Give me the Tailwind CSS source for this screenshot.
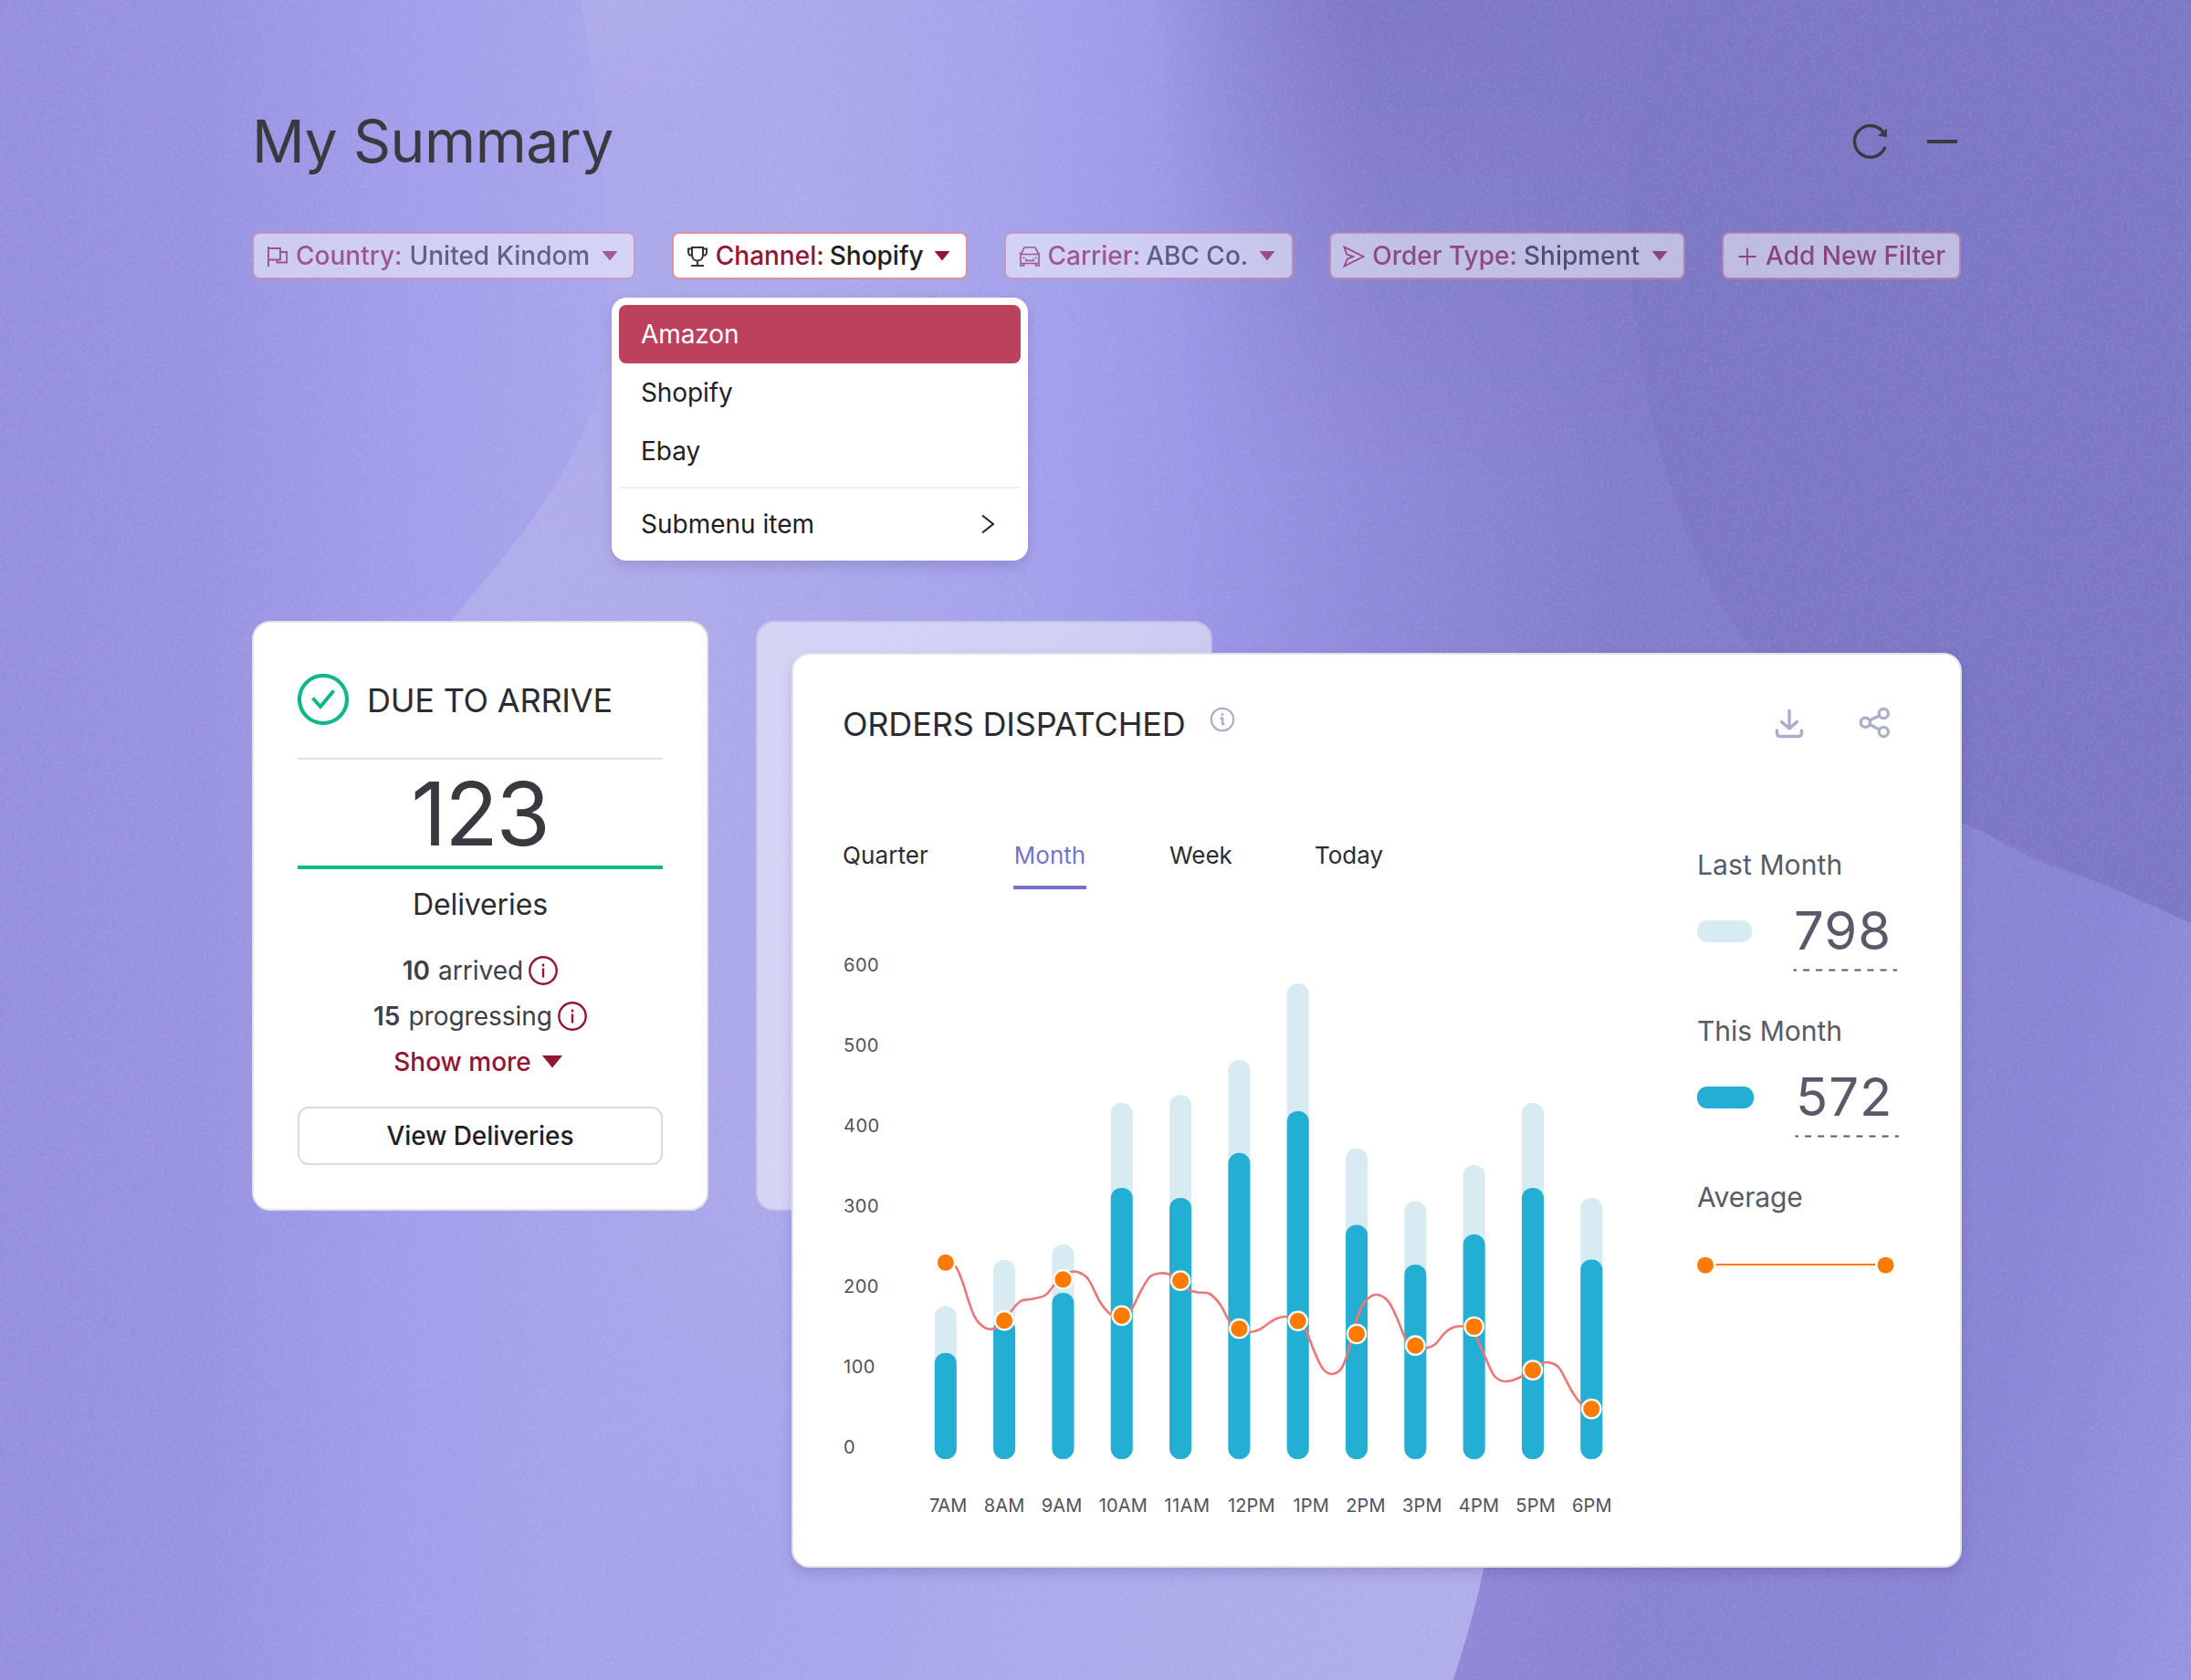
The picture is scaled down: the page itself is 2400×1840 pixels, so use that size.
<!DOCTYPE html>
<html lang="en">
<head>
<meta charset="utf-8">
<title>My Summary</title>
<script src="https://cdn.jsdelivr.net/npm/@tailwindcss/browser@4"></script>
</head>
<body class="font-['Inter',sans-serif]">
<div class="relative w-[2400px] h-[1840px] overflow-hidden bg-[#a19deb]">
  <!-- backdrop -->
  <svg class="absolute inset-0" width="2400" height="1840" viewBox="0 0 2400 1840">
    <defs>
      <linearGradient id="base" gradientUnits="userSpaceOnUse" x1="0" y1="0" x2="2400" y2="0">
        <stop offset="0" stop-color="#9590dd"/><stop offset=".09" stop-color="#9893e1"/><stop offset=".19" stop-color="#a29eeb"/>
        <stop offset=".27" stop-color="#a7a4eb"/><stop offset=".36" stop-color="#acaaea"/><stop offset=".47" stop-color="#a4a1ec"/>
        <stop offset=".54" stop-color="#9b97e6"/><stop offset=".63" stop-color="#8e89d8"/><stop offset=".74" stop-color="#827dcb"/><stop offset="1" stop-color="#7f7ac8"/>
      </linearGradient>
      <linearGradient id="beam" gradientUnits="userSpaceOnUse" x1="600" y1="0" x2="1100" y2="0">
        <stop offset="0" stop-color="#afadea"/><stop offset=".3" stop-color="#adabea"/><stop offset="1" stop-color="#a3a0ec" stop-opacity="0"/>
      </linearGradient>
      <linearGradient id="fade" gradientUnits="userSpaceOnUse" x1="0" y1="0" x2="0" y2="1250">
        <stop offset="0" stop-color="#fff"/><stop offset=".1" stop-color="#666"/><stop offset=".28" stop-color="#666"/><stop offset=".42" stop-color="#eee"/><stop offset=".55" stop-color="#fff"/><stop offset="1" stop-color="#000"/>
      </linearGradient>
      <mask id="beamMask"><rect width="2400" height="1840" fill="url(#fade)"/></mask>
      <linearGradient id="top" gradientUnits="userSpaceOnUse" x1="1260" y1="0" x2="1490" y2="-20">
        <stop offset="0" stop-color="#7d78c5" stop-opacity="0"/><stop offset="1" stop-color="#7d78c5"/>
      </linearGradient>
      <linearGradient id="topFade" gradientUnits="userSpaceOnUse" x1="0" y1="0" x2="0" y2="520">
        <stop offset="0" stop-color="#fff"/><stop offset=".3" stop-color="#bbb"/><stop offset="1" stop-color="#000"/>
      </linearGradient>
      <mask id="topMask"><rect width="2400" height="1840" fill="url(#topFade)"/></mask>
      <linearGradient id="low" gradientUnits="userSpaceOnUse" x1="500" y1="1500" x2="1600" y2="1700">
        <stop offset="0" stop-color="#a3a0ec" stop-opacity="0"/><stop offset=".3" stop-color="#a5a2ec"/><stop offset=".6" stop-color="#abaaeb"/><stop offset="1" stop-color="#b0aeea"/>
      </linearGradient>
      <linearGradient id="lowFade" gradientUnits="userSpaceOnUse" x1="0" y1="1300" x2="0" y2="1700">
        <stop offset="0" stop-color="#000"/><stop offset="1" stop-color="#fff"/>
      </linearGradient>
      <mask id="lowMask"><rect width="2400" height="1840" fill="url(#lowFade)"/></mask>
      <linearGradient id="lowR" gradientUnits="userSpaceOnUse" x1="1600" y1="1500" x2="2400" y2="1700">
        <stop offset="0" stop-color="#8f89d9"/><stop offset=".3" stop-color="#8883d1"/><stop offset=".7" stop-color="#8a85d4"/><stop offset="1" stop-color="#9792e0"/>
      </linearGradient>
      <filter id="grain" x="0" y="0" width="100%" height="100%">
        <feTurbulence type="fractalNoise" baseFrequency=".3" numOctaves="3" seed="4"/>
        <feColorMatrix values="0 0 0 0 1  0 0 0 0 1  0 0 0 0 1  1.1 0 0 0 -.45"/>
      </filter>
    </defs>
    <rect width="2400" height="1840" fill="url(#base)"/>
    <rect width="2400" height="600" fill="url(#top)" mask="url(#topMask)"/>
    <path d="M636 0C655 120 668 250 664 380C655 490 570 590 492 682L300 1300H1150V0Z" fill="url(#beam)" mask="url(#beamMask)"/>
    <path d="M400 1300H1670C1655 1620 1625 1740 1592 1840H400Z" fill="url(#low)" mask="url(#lowMask)"/>
    <path d="M1660 1500C1650 1620 1625 1740 1592 1840H2400V982C2300 975 2220 945 2148 895V1500Z" fill="url(#lowR)"/>
    <path d="M1782 230C1790 460 1850 630 1925 716C2000 800 2060 856 2148 900C2230 938 2320 974 2400 1011V0H1830C1800 60 1782 140 1782 230Z" fill="#7c77c4"/>
    <rect width="2400" height="1840" filter="url(#grain)" opacity=".16"/>
  </svg>

  <main class="relative pl-[276px] w-[2148px] pt-[115px]">
    <header class="flex items-center justify-between h-20">
      <h1 class="text-[64px] leading-[80px] text-[#393a3f] tracking-[-0.4px]">My Summary</h1>
      <div class="flex items-center">
        <svg width="44" height="44" viewBox="2026 133 44 44" class="mr-[41px]" fill="none" stroke="#393a3f" stroke-width="3.4">
          <path d="M2063.3 145.5A17.3 17.3 0 1 0 2065 160.9"/><path d="M2066.8 140.8V150.2L2057 148.6Z" fill="#393a3f" stroke="none"/>
        </svg>
        <span class="block w-[33px] h-1 bg-[#393a3f] mr-[4px]"></span>
      </div>
    </header>

    <nav class="flex justify-between mt-[59px] h-[52px] text-[28px] leading-[47px] font-medium whitespace-nowrap text-[#1f2024]">
      <div class="flex items-center w-[420px] border-2 border-[#e08e9e] rounded-lg bg-white opacity-50 pl-[15px] pt-px">
        <svg width="22" height="22" viewBox="0 0 22 22" fill="none" stroke="#931535" stroke-width="1.9"><path d="M1 0V22M1 2H14V14.500H1M14 6H21.200V17.500H10.500V14.500"/></svg>
        <span class="ml-[9px] text-[#931535]">Country:</span><span class="ml-2">United Kindom</span>
        <svg class="ml-[13px]" width="18" height="11" viewBox="0 0 18 11"><path d="M.5 0H17.500L9 10.500Z" fill="#931535"/></svg>
      </div>
      <div class="flex items-center w-[324px] border-2 border-[#e08e9e] rounded-lg bg-white pl-[15px] pt-px">
        <svg width="22" height="22" viewBox="0 0 22 22" fill="none" stroke="#333539" stroke-width="2"><path d="M5 1H17V9C17 13 14.500 15.500 11 15.500S5 13 5 9ZM5 2.500H1V6C1 8.500 2.500 10 5.500 10M17 2.500H21V6C21 8.500 19.500 10 16.500 10M11 15.500V21M4 21H18"/></svg>
        <span class="ml-[9px] text-[#931535]">Channel:</span><span class="ml-[6px]">Shopify</span>
        <svg class="ml-[11px]" width="18" height="11" viewBox="0 0 18 11"><path d="M.5 0H17.500L9 10.500Z" fill="#931535"/></svg>
      </div>
      <div class="flex items-center w-[317px] border-2 border-[#e08e9e] rounded-lg bg-white opacity-50 pl-[14px] pt-px">
        <svg width="24" height="22" viewBox="0 0 24 22" fill="none" stroke="#931535" stroke-width="1.7"><path d="M2 21V9.500L5.500 1.800Q5.800 1 6.800 1H17.200Q18.200 1 18.500 1.800L22 9.500V21H18.500V18.500H5.500V21ZM.5 7.500H3M21 7.500H23.500M3 8.500H21M2 18.500H22M8 13.500V15.500H16V13.500M4.500 12.500H6.500M17.500 12.500H19.500"/></svg>
        <span class="ml-[8px] text-[#931535]">Carrier:</span><span class="ml-[6px]">ABC Co.</span>
        <svg class="ml-[12px]" width="18" height="11" viewBox="0 0 18 11"><path d="M.5 0H17.500L9 10.500Z" fill="#931535"/></svg>
      </div>
      <div class="flex items-center w-[390px] border-2 border-[#e08e9e] rounded-lg bg-white opacity-50 pl-[13px] pt-px">
        <svg width="24" height="24" viewBox="0 0 24 24" fill="none" stroke="#931535" stroke-width="1.8"><path d="M1.500 1.500L22.500 12L1.500 22.500L4.800 14.600L11 12L4.300 9.600Z"/></svg>
        <span class="ml-[8px] text-[#931535]">Order Type:</span><span class="ml-[7px]">Shipment</span>
        <svg class="ml-[13px]" width="18" height="11" viewBox="0 0 18 11"><path d="M.5 0H17.500L9 10.500Z" fill="#931535"/></svg>
      </div>
      <div class="flex items-center w-[262px] border-2 border-[#e08e9e] rounded-lg bg-white opacity-50 pl-[16px] pt-px">
        <svg width="20" height="20" viewBox="0 0 20 20" fill="none" stroke="#931535" stroke-width="1.8"><path d="M10 .5V19.500M.5 10H19.500"/></svg>
        <span class="ml-[10px] text-[#931535]">Add New Filter</span>
      </div>
    </nav>

    <div class="absolute left-[670px] top-[326px] w-[456px] h-[288px] rounded-2xl bg-white p-2 shadow-[0_6px_14px_rgba(60,50,120,0.2)] text-[28px] leading-[64px] text-[#1f2024]">
      <div class="h-16 rounded-lg bg-[#bb415d] px-6 tracking-[-0.1px] text-white">Amazon</div>
      <div class="h-16 px-6 tracking-[-0.1px]">Shopify</div>
      <div class="h-16 px-6">Ebay</div>
      <div class="my-[7px] h-[2px] bg-[#efefef]"></div>
      <div class="flex h-16 items-center justify-between pl-6 pr-[28px]">Submenu item
        <svg width="16" height="22" viewBox="0 0 16 22" fill="none" stroke="#1f2024" stroke-width="2"><path d="M2 1.500L14 11L2 20.500"/></svg>
      </div>
    </div>

    <div class="flex items-start mt-[374px]">
      <section class="w-[500px] h-[646px] shrink-0 rounded-[20px] border-2 border-[#e2e2e8] bg-white px-12 pt-14">
        <div class="flex items-center h-14">
          <svg width="56" height="56" viewBox="326 738 56 56" fill="none" stroke="#0fb888"><circle cx="354" cy="766" r="26" stroke-width="4.200"/><path d="M342.500 764.500L351 774L365.500 756.500" stroke-width="4"/></svg>
          <h2 class="ml-5 pt-px text-[36px] leading-[56px] tracking-[-0.22px] text-[#2b2c33] whitespace-nowrap">DUE TO ARRIVE</h2>
        </div>
        <div class="mt-9 h-[2px] bg-[#e2e2e4]"></div>
        <div class="h-[116px] pr-px text-center text-[96px] leading-[118px] tracking-[-2.2px] text-[#393a40]">123</div>
        <div class="h-1 bg-[#0fb888]"></div>
        <div class="h-[78px] text-center text-[32px] leading-[78px] tracking-[-0.1px] text-[#2b2c33]">Deliveries</div>
        <div class="mt-2 flex h-[50px] items-center justify-center text-[28px] text-[#3f4047]"><b class="font-semibold mr-[9px]">10</b>arrived
          <svg class="ml-[6px]" width="32" height="32" viewBox="0 0 32 32" fill="none" stroke="#931535" stroke-width="2.400"><circle cx="16" cy="16" r="14.700"/><path d="M16 13.500V23.500M16 8.500V11.500"/></svg>
        </div>
        <div class="flex h-[50px] items-center justify-center text-[28px] text-[#3f4047]"><b class="font-semibold mr-[9px]">15</b>progressing
          <svg class="ml-[6px]" width="32" height="32" viewBox="0 0 32 32" fill="none" stroke="#931535" stroke-width="2.400"><circle cx="16" cy="16" r="14.700"/><path d="M16 13.500V23.500M16 8.500V11.500"/></svg>
        </div>
        <div class="flex h-[50px] items-center justify-center text-[28px] font-medium text-[#931535]">Show more
          <svg class="ml-[11px] mr-1" width="24" height="14" viewBox="0 0 24 14"><path d="M1 0H23L12 13.500Z" fill="#931535"/></svg>
        </div>
        <div class="mt-6 h-16 rounded-xl border-2 border-[#dadadd] text-center text-[28px] font-medium leading-[61px] tracking-[-0.08px] text-[#1f2024]">View Deliveries</div>
      </section>

      <section class="ml-[52px] w-[500px] h-[646px] shrink-0 rounded-[20px] border-2 border-[#e2e2e8] bg-white opacity-50"></section>

      <section class="relative -ml-[461px] mt-[35px] w-[1282px] h-[1002px] shrink-0 rounded-[20px] border-2 border-[#e2e2e8] bg-white pl-[54px] pt-11 shadow-[0_6px_14px_rgba(60,50,120,0.2)]">
        <div class="flex h-16 items-center">
          <h2 class="text-[36px] tracking-[-0.17px] text-[#2b2c33] whitespace-nowrap">ORDERS DISPATCHED</h2>
          <svg class="ml-[26px] -mt-[10px]" width="28" height="28" viewBox="0 0 28 28" fill="none" stroke="#a9afc8" stroke-width="2.200"><circle cx="14" cy="14" r="12.200"/><path d="M11.500 12.800H14.200V19M13 19H16.300" stroke-width="2.400"/><circle cx="13.800" cy="8.500" r="1.500" fill="#a9afc8" stroke="none"/></svg>
          <svg class="ml-auto -mt-px" width="36" height="36" viewBox="1942 775 36 36" fill="none" stroke="#a9afc8" stroke-width="3.400" stroke-linecap="round" stroke-linejoin="round"><path d="M1960 778.500V797.500M1951.500 790.500L1960 798L1968.500 790.500M1946.500 800V803Q1946.500 806.500 1950 806.500H1970Q1973.500 806.500 1973.500 803V800"/></svg>
          <svg class="ml-[56px] mr-[73px] -mt-[2px]" width="40" height="40" viewBox="2034 772 40 40" fill="none" stroke="#a9afc8" stroke-width="3.200"><circle cx="2043.300" cy="791.300" r="5.100"/><circle cx="2063.300" cy="781.500" r="5.100"/><circle cx="2063.300" cy="801.500" r="5.100"/><path d="M2048 789L2058.500 784M2048 793.500L2058.500 799"/></svg>
        </div>
        <div class="flex mt-[87px]">
          <div class="w-[936px] shrink-0">
            <div class="flex h-[62px] text-[26px] leading-[50px] text-[#2b2c33]">
              <div class="w-[187px] tracking-[0.1px]">Quarter</div>
              <div class="w-[80px] border-b-4 border-[#7572d0] text-center text-[#7572d0]">Month</div>
              <div class="ml-[91px] w-[159px]">Week</div>
              <div>Today</div>
            </div>
            <div class="mt-[39px] flex">
              <div class="w-[95px] pl-px text-[20px] leading-[88px] tracking-[0.5px] text-[#4f5260]">
                <div>600</div><div>500</div><div>400</div><div>300</div><div>200</div><div>100</div><div>0</div>
              </div>
              <svg id="chart" width="748" height="616" viewBox="1018 1013 748 616" fill="none"></svg>
            </div>
            <div class="ml-[95px] flex h-10 w-[748px] items-center justify-between text-[20px] tracking-[0.2px] text-[#4f5260]">
              <span>7AM</span><span>8AM</span><span>9AM</span><span>10AM</span><span class="tracking-[0.6px]">11AM</span><span class="ml-px">12PM</span><span class="ml-[1.5px]">1PM</span><span>2PM</span><span>3PM</span><span>4PM</span><span>5PM</span><span>6PM</span>
            </div>
          </div>
          <div class="text-[#575a68]">
            <div class="h-[182px]">
              <div class="h-[70px] text-[30px] leading-[71px] tracking-[0.1px]">Last Month</div>
              <div class="flex h-[76px] items-center"><span class="block h-6 w-[60px] rounded-[11px] bg-[#d8ebf3]"></span><span class="ml-[46px] pb-[3px] text-[58px] leading-[72px] tracking-[1px]">798</span></div>
              <svg class="ml-[105px] mt-[3px] block" width="116" height="3" viewBox="0 0 116 3"><path d="M.5 1.500H114" stroke="#575a68" stroke-width="2" stroke-dasharray="7 7.080" stroke-dashoffset="3.500"/></svg>
            </div>
            <div class="h-[182px]">
              <div class="h-[70px] text-[30px] leading-[71px]">This Month</div>
              <div class="flex h-[76px] items-center"><span class="block h-6 w-[62px] rounded-[11px] bg-[#23aed3]"></span><span class="ml-[46px] pb-[3px] text-[58px] leading-[72px] tracking-[1px]">572</span></div>
              <svg class="ml-[107px] mt-[3px] block" width="116" height="3" viewBox="0 0 116 3"><path d="M.5 1.500H114" stroke="#575a68" stroke-width="2" stroke-dasharray="7 7.080" stroke-dashoffset="3.500"/></svg>
            </div>
            <div class="h-[70px] text-[30px] leading-[71px] tracking-[-0.1px]">Average</div>
            <svg class="mt-[29px] block" width="220" height="20" viewBox="1859 1375 220 20"><circle cx="1868" cy="1385.700" r="9" fill="#ff7a00"/><circle cx="2065.500" cy="1385.700" r="9" fill="#ff7a00"/><path d="M1879.500 1385H2054" stroke="#ff7a00" stroke-width="2"/></svg>
          </div>
        </div>
      </section>
    </div>
  </main>
</div>
<script>
  const last = [1430.4,1379.8,1363,1208,1199.3,1161,1077.2,1257.8,1315.5,1275.9,1208,1312];
  const current = [1481.7,1445,1416,1301,1312,1262.8,1217,1341.5,1385,1352,1301,1379.4];
  const avg = [1382.8,1446.3,1401.3,1440.9,1402.6,1455.2,1446.8,1461,1473.7,1453,1500.6,1543.1];
  const line = [[1036,1381],[1046.7,1387],[1054,1403],[1060.7,1424],[1067,1441],[1073.3,1450],[1082.7,1455.6],[1091.7,1454],[1100,1446.3],[1107,1436.700],[1118,1425],[1130,1422.8],[1145,1418.500],[1155,1407],[1163,1398],[1171.7,1393.4],[1180,1393],[1192,1401],[1205,1426],[1216.7,1439.6],[1228.7,1443],[1239,1434.6],[1250,1413.5],[1260,1398],[1271.7,1394.4],[1283.3,1396.500],[1293,1403],[1301.7,1412.3],[1313.3,1415.6],[1325,1417],[1336.7,1429],[1346.7,1447],[1357.3,1457],[1369.3,1459],[1380,1456],[1390,1449],[1400,1443.500],[1410,1442],[1421.5,1444],[1430,1455.6],[1440,1481],[1449,1499],[1459.3,1504.8],[1470,1497.7],[1478.3,1474.5],[1485.7,1447],[1494,1427],[1507,1418],[1520,1424.500],[1530,1443],[1540,1467],[1550,1476],[1561.7,1476.6],[1571.7,1472.500],[1583,1459.500],[1592,1453.700],[1603,1452.7],[1611,1456],[1617,1464],[1628,1489],[1637,1507],[1649,1513],[1666,1508],[1679,1498],[1688,1493.3],[1697,1492.300],[1708,1498.500],[1722,1524],[1733,1538.5],[1743,1543]];
  const x = i => 1035.8 + i * 64.32;
  const bar = (i, top, fill) => `<rect x="${x(i) - 12}" y="${top}" width="24" height="${1598 - top}" rx="11.500" fill="${fill}"/>`;
  let d = 'M' + line[0];
  for (let i = 0; i < line.length - 1; i++) {
    const p = line[i - 1] || line[i], a = line[i], b = line[i + 1], n = line[i + 2] || b;
    d += `C${a[0] + (b[0] - p[0]) / 6} ${a[1] + (b[1] - p[1]) / 6} ${b[0] - (n[0] - a[0]) / 6} ${b[1] - (n[1] - a[1]) / 6} ${b[0]} ${b[1]}`;
  }
  document.getElementById('chart').innerHTML =
    last.map((t, i) => bar(i, t, '#d8ebf3')).join('') +
    current.map((t, i) => bar(i, t, '#23aed3')).join('') +
    `<path d="${d}" stroke="#f07575" stroke-width="2.600"/>` +
    avg.map((y, i) => `<circle cx="${x(i)}" cy="${y}" r="10.200" fill="#ff7a00" stroke="#fff" stroke-width="2.300"/>`).join('');
</script>
</body>
</html>
